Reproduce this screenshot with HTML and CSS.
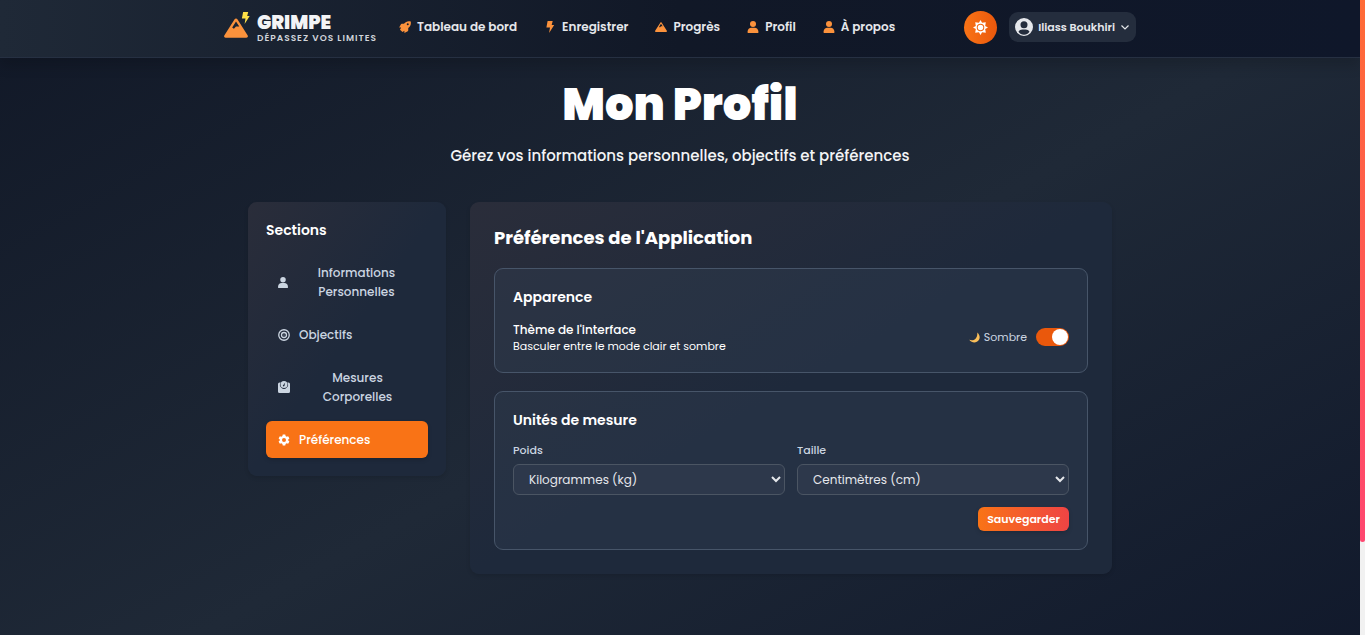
FILE: index.html
```html
<!DOCTYPE html>
<html lang="fr">
<head>
<meta charset="utf-8">
<meta name="viewport" content="width=device-width, initial-scale=1">
<title>Grimpe - Mon Profil</title>
<link rel="stylesheet" href="styles.css">
</head>
<body>
<svg class="sprite" aria-hidden="true">
  <symbol id="mountain" viewBox="0 0 24 20"><path fill-rule="evenodd" d="M12 0.500c.6 0 1.100.3 1.400.8L23.700 17.600c.6 1-.1 2.200-1.300 2.200H1.600C.4 19.800-.3 18.600.3 17.600L10.600 1.300c.3-.5.8-.8 1.400-.8zM12 3.400 8.200 9.400l1.700 1.400L12 8.600h3.300z"/></symbol>
  <symbol id="bolt" viewBox="0 0 14 20"><path d="M3 0h8.500L9.800 6.500H14L5.500 20 7 11H1z"/></symbol>
  <symbol id="person" viewBox="0 0 16 18"><circle cx="8" cy="4.500" r="4.500"/><path d="M0 18v-2.500C0 12.500 2.500 10 5.500 10h5c3 0 5.500 2.500 5.500 5.500V18z"/></symbol>
  <symbol id="rocket" viewBox="0 0 24 24"><path fill-rule="evenodd" d="M23.500.8C18-.5 13.500.8 10 5.500H5.500c-.7 0-1.300.4-1.600 1L.3 13.200h4L2 17.500 7 22l3.800-2.500V24l6.700-3.700c.6-.3 1-.9 1-1.600V14C23 10.500 24.500 6 23.500.8zM17.500 4.500a2 2 0 1 1 0 4 2 2 0 0 1 0-4z"/></symbol>
</svg>
<div class="page">
  <header class="topbar">
    <div class="topbar-inner">
      <a class="brand" href="#">
        <span class="brand-mark">
          <svg class="brand-mountain"><use href="#mountain"/></svg>
          <svg class="brand-bolt"><use href="#bolt"/></svg>
        </span>
        <span class="brand-text">
          <span class="brand-name">GRIMPE</span>
          <span class="brand-tag">DÉPASSEZ VOS LIMITES</span>
        </span>
      </a>
      <nav class="nav" aria-label="Navigation principale">
        <a href="#"><svg><use href="#rocket"/></svg>Tableau de bord</a>
        <a href="#"><svg><use href="#bolt"/></svg>Enregistrer</a>
        <a href="#"><svg><use href="#mountain"/></svg>Progrès</a>
        <a href="#"><svg><use href="#person"/></svg>Profil</a>
        <a href="#"><svg><use href="#person"/></svg>À propos</a>
      </nav>
      <div class="actions">
        <button class="theme-button" type="button" aria-label="Changer de thème">
          <svg viewBox="0 0 24 24"><path fill-rule="evenodd" d="M12 0l2.500 4.500L20.500 3.500 19.500 9.500 24 12l-4.500 2.500 1 6-6-1L12 24l-2.500-4.500-6 1 1-6L0 12l4.500-2.500-1-6 6 1zM12 6a6 6 0 1 0 0 12 6 6 0 0 0 0-12z"/><circle cx="12" cy="12" r="4.400"/></svg>
        </button>
        <button class="user-button" type="button">
          <svg class="avatar" viewBox="0 0 18 18"><path fill-rule="evenodd" d="M9 0a9 9 0 1 1 0 18A9 9 0 0 1 9 0zM9 3.200a3.500 3.500 0 1 0 0 7 3.500 3.500 0 0 0 0-7zM3.500 13.800C4.700 15.600 6.700 16.700 9 16.700s4.300-1.100 5.500-2.900c-.8-1.500-2.300-2.300-3.800-2.300H7.300c-1.500 0-3 .8-3.800 2.300z"/></svg>
          <span>Iliass Boukhiri</span>
          <svg class="chevron" viewBox="0 0 10 10"><path d="M1.500 3.500 5 7l3.500-3.500"/></svg>
        </button>
      </div>
    </div>
  </header>

  <main class="main">
    <h1>Mon Profil</h1>
    <p class="lead">Gérez vos informations personnelles, objectifs et préférences</p>
    <div class="layout">
      <aside class="sidebar">
        <h3>Sections</h3>
        <div class="tabs">
          <button type="button"><svg class="icon-small"><use href="#person"/></svg><span>Informations<br>Personnelles</span></button>
          <button type="button"><svg viewBox="0 0 24 24"><g fill="none" stroke="currentColor" stroke-width="2.600"><circle cx="12" cy="12" r="10.500"/><circle cx="12" cy="12" r="5"/></g><circle cx="12" cy="12" r="1"/></svg><span>Objectifs</span></button>
          <button type="button"><svg viewBox="0 0 24 24"><path d="M3 3h2.500a8 8 0 1 0 13 0H21a3 3 0 0 1 3 3v15a3 3 0 0 1-3 3H3a3 3 0 0 1-3-3V6a3 3 0 0 1 3-3z"/><path fill-rule="evenodd" d="M12 0a7 7 0 1 1 0 14 7 7 0 0 1 0-14zM14.500 3 11 7.500a1.700 1.700 0 1 0 2 1z"/></svg><span>Mesures<br>Corporelles</span></button>
          <button class="is-active" type="button"><svg viewBox="0 0 24 24"><path fill-rule="evenodd" d="M9.500 1h5l.7 3.200 2 1.200 3.100-1 2.500 4.400L20.400 11v2l2.400 2.200-2.500 4.400-3.100-1-2 1.200-.7 3.200h-5l-.7-3.200-2-1.200-3.100 1-2.500-4.400L3.600 13v-2L1.200 8.800l2.500-4.400 3.100 1 2-1.200zM12 8a4 4 0 1 0 0 8 4 4 0 0 0 0-8z"/></svg><span>Préférences</span></button>
        </div>
      </aside>

      <section class="panel">
        <h2>Préférences de l'Application</h2>
        <div class="card">
          <h3>Apparence</h3>
          <div class="theme-row">
            <div class="theme-text">
              <strong>Thème de l'interface</strong>
              <span>Basculer entre le mode clair et sombre</span>
            </div>
            <label class="switch">
              <svg viewBox="0 0 24 24"><path d="M18 1c5 4 7 11 3.500 16.500C17 24 7 25 0.500 17c6 2 12 1 15-4 2.500-4 3-8 2.500-12z"/></svg>
              <span>Sombre</span>
              <input type="checkbox" role="switch" checked>
            </label>
          </div>
        </div>
        <form class="card">
          <h3>Unités de mesure</h3>
          <div class="fields">
            <div class="field">
              <label for="poids">Poids</label>
              <select id="poids"><option>Kilogrammes (kg)</option><option>Livres (lb)</option></select>
            </div>
            <div class="field">
              <label for="taille">Taille</label>
              <select id="taille"><option>Centimètres (cm)</option><option>Pieds (ft)</option></select>
            </div>
          </div>
          <button class="save" type="button">Sauvegarder</button>
        </form>
      </section>
    </div>
  </main>
</div>
<div class="scroll-track"><div class="scroll-thumb"></div></div>
</body>
</html>
```
FILE: styles.css
```css
* { box-sizing: border-box; }

body {
  margin: 0;
  min-height: 100vh;
  display: flex;
  font-family: Poppins, Inter, "Open Sans", sans-serif;
  font-size: 12px;
  color: #fff;
  background: #111827;
}

h1, h2, h3, p { margin: 0; }
a { color: inherit; text-decoration: none; }
button { font: inherit; color: inherit; border: 0; cursor: pointer; }
svg { display: block; fill: currentColor; }
.sprite { display: none; }

.page {
  flex: 1;
  min-width: 0;
  background: linear-gradient(to bottom right, #111827, #1f2937 50%, #0f172a) 0 0 / 100% 117vh no-repeat #0f172a;
}

/* Top bar */
.topbar {
  border-bottom: 1px solid #263042;
  background: linear-gradient(to right, #1f2937, #111827 50%, #0f172a);
  box-shadow: 0 8px 12px rgba(0, 0, 0, .15);
}
.topbar-inner {
  display: flex;
  align-items: center;
  max-width: 912px;
  height: 57px;
  margin: 0 auto;
  padding-bottom: 3px;
}
.brand { display: flex; align-items: center; gap: 9px; }
.brand-mark { position: relative; width: 24px; height: 24px; }
.brand-mountain { width: 24px; height: 24px; color: #fb923c; padding-top: 2px; }
.brand-bolt {
  position: absolute;
  top: -3px;
  right: -2px;
  width: 9px;
  height: 12px;
  color: #fde047;
}
.brand-text { display: flex; flex-direction: column; padding-top: 4px; color: #f3f4f6; }
.brand-name { font-size: 19px; line-height: 19px; font-weight: 900; }
.brand-tag {
  font-size: 9px;
  line-height: 13px;
  font-weight: 600;
  letter-spacing: 1px;
  color: #d1d5db;
}

.nav { display: flex; gap: 27px; margin-left: 22px; }
.nav a {
  display: flex;
  align-items: center;
  gap: 6px;
  font-weight: 600;
  line-height: 18px;
  color: #e5e7eb;
  white-space: nowrap;
}
.nav svg { width: 12px; height: 12px; color: #fb923c; }

.actions { display: flex; align-items: center; gap: 12px; margin-left: auto; }
.theme-button {
  display: grid;
  place-items: center;
  width: 33px;
  height: 33px;
  padding: 0;
  border-radius: 50%;
  background: linear-gradient(to right, #f97316, #ea580c);
}
.theme-button svg { width: 15px; height: 15px; }
.user-button {
  display: flex;
  align-items: center;
  gap: 5px;
  height: 30px;
  padding: 0 6px;
  border-radius: 9px;
  background: #242d3d;
  color: #e5e7eb;
  font-size: 11px;
  font-weight: 600;
  white-space: nowrap;
}
.avatar { width: 18px; height: 18px; }
.chevron {
  width: 10px;
  height: 10px;
  fill: none;
  stroke: currentColor;
  stroke-width: 1.200;
}

/* Page content */
.main {
  max-width: 912px;
  margin: 0 auto;
  padding: 24px 24px 60px;
}
.main h1 {
  text-align: center;
  font-size: 45px;
  line-height: 45px;
  font-weight: 900;
}
.lead {
  margin: 17px 0 34px;
  text-align: center;
  font-size: 15px;
  line-height: 24px;
  font-weight: 500;
  color: #f3f4f6;
}
.layout {
  display: grid;
  grid-template-columns: 198px 1fr;
  align-items: start;
  gap: 24px;
}
.sidebar, .panel {
  border-radius: 9px;
  box-shadow: 0 2px 4px rgba(0, 0, 0, .12);
  background: linear-gradient(to bottom right, #2a2d3a, #1e293b 50%, #1e293b);
}
.sidebar { padding: 18px; }
.sidebar h3, .card h3 {
  font-size: 14px;
  line-height: 21px;
  font-weight: 600;
}
.tabs { display: flex; flex-direction: column; gap: 6px; margin-top: 13px; }
.tabs button {
  display: flex;
  align-items: center;
  gap: 9px;
  padding: 9px 12px;
  border-radius: 6px;
  background: none;
  color: #cbd5e1;
  line-height: 19px;
  font-weight: 500;
}
.tabs svg { flex: none; width: 12px; height: 12px; }
.tabs .icon-small { width: 10px; height: 11px; }
.tabs button span { text-align: center; }
.tabs button:has(br) span { flex: 1; }
.tabs .is-active {
  background: #f97316;
  color: #fff;
  box-shadow: 0 2px 4px rgba(0, 0, 0, .15);
}

.panel {
  display: flex;
  flex-direction: column;
  gap: 18px;
  padding: 24px;
}
.panel h2 { font-size: 18px; line-height: 24px; font-weight: 700; }
.card {
  padding: 18px;
  border: 1px solid #475569;
  border-radius: 9px;
  background: rgba(51, 65, 85, .35);
}
.card h3 { margin-bottom: 12px; }
.theme-row { display: flex; align-items: center; justify-content: space-between; }
.theme-text { display: flex; flex-direction: column; }
.theme-text strong { line-height: 19px; font-weight: 500; }
.theme-text span { font-size: 11px; line-height: 15px; }
.switch {
  display: flex;
  align-items: center;
  gap: 9px;
  font-size: 11px;
  color: #cbd5e1;
}
.switch svg { width: 11px; height: 11px; margin-right: -5px; color: #fbbf5a; }
.switch input {
  appearance: none;
  display: flex;
  justify-content: flex-end;
  width: 33px;
  height: 18px;
  margin: 0;
  padding: 1px;
  border-radius: 9px;
  background: #ea580c;
}
.switch input::before {
  content: "";
  width: 16px;
  height: 16px;
  border-radius: 50%;
  background: #fff;
}

.fields { display: grid; grid-template-columns: 1fr 1fr; gap: 12px; }
.field { display: flex; flex-direction: column; gap: 6px; }
.field label {
  font-size: 11px;
  line-height: 15px;
  font-weight: 500;
  color: #cbd5e1;
}
.field select {
  height: 31px;
  padding: 0 0 0 11px;
  border: 1px solid #4b5563;
  border-radius: 6px;
  background-color: #2d384b;
  color: #e5e7eb;
  font: inherit;
}
.save {
  display: block;
  height: 24px;
  margin: 12px 0 0 auto;
  padding: 0 9px;
  border-radius: 6px;
  background: linear-gradient(to right, #f97316, #ef4444);
  box-shadow: 0 2px 4px rgba(0, 0, 0, .15);
  font-size: 11px;
  font-weight: 600;
}

/* Scroll indicator */
.scroll-track { width: 5px; background: #f1f1f1; }
.scroll-thumb {
  height: 542px;
  border-radius: 0 0 3px 3px;
  background: linear-gradient(#ff6b35, #ff4770);
}
```
